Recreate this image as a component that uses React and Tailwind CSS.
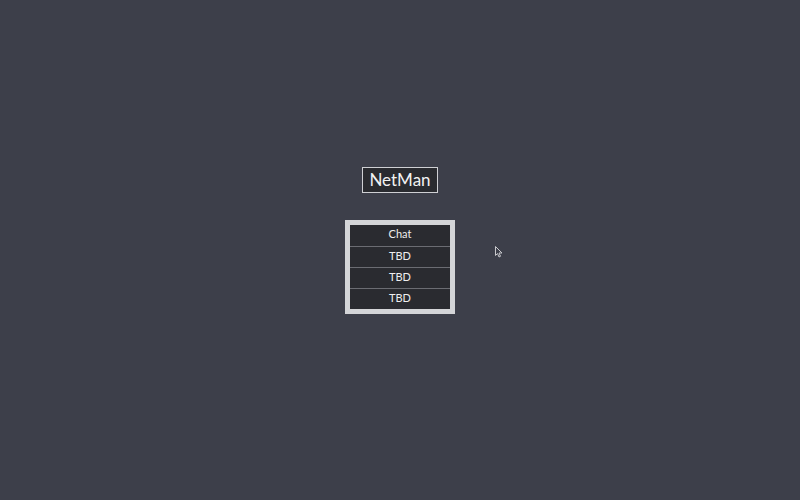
export default function App() {
  const rows = ["Chat", "TBD", "TBD", "TBD"];
  return (
    <div className="relative w-full h-[500px] bg-[#3d3f4a] flex flex-col items-center pt-[167px]" style={{ fontFamily: "Lato, 'Open Sans', sans-serif" }}>
      <div className="h-[26px] px-[6px] border border-[#cfd0d4] bg-[#2a2b30] text-[#f2f2f2] text-[17px] leading-[24px] flex items-center">
        NetMan
      </div>
      <div className="mt-[27px] w-[110px] border-[5px] border-[#d4d5d8] bg-[#2a2b30] flex flex-col">
        {rows.map((r, i) => (
          <div key={i} className={`h-[21px] pb-[2px] flex items-center justify-center text-[11px] text-[#eeeeee] ${i > 0 ? "border-t border-[#6b6c72]" : ""}`}>
            {r}
          </div>
        ))}
      </div>
      <svg className="absolute left-[495px] top-[246px]" width="8" height="12" viewBox="0 0 8 12">
        <path d="M0.5 0.5 L0.5 9.5 L2.5 7.5 L4 11 L5.5 10.3 L4 7 L7 7 Z" fill="#3d3f4a" stroke="#c8c8cc" strokeWidth="1" />
      </svg>
    </div>
  );
}
